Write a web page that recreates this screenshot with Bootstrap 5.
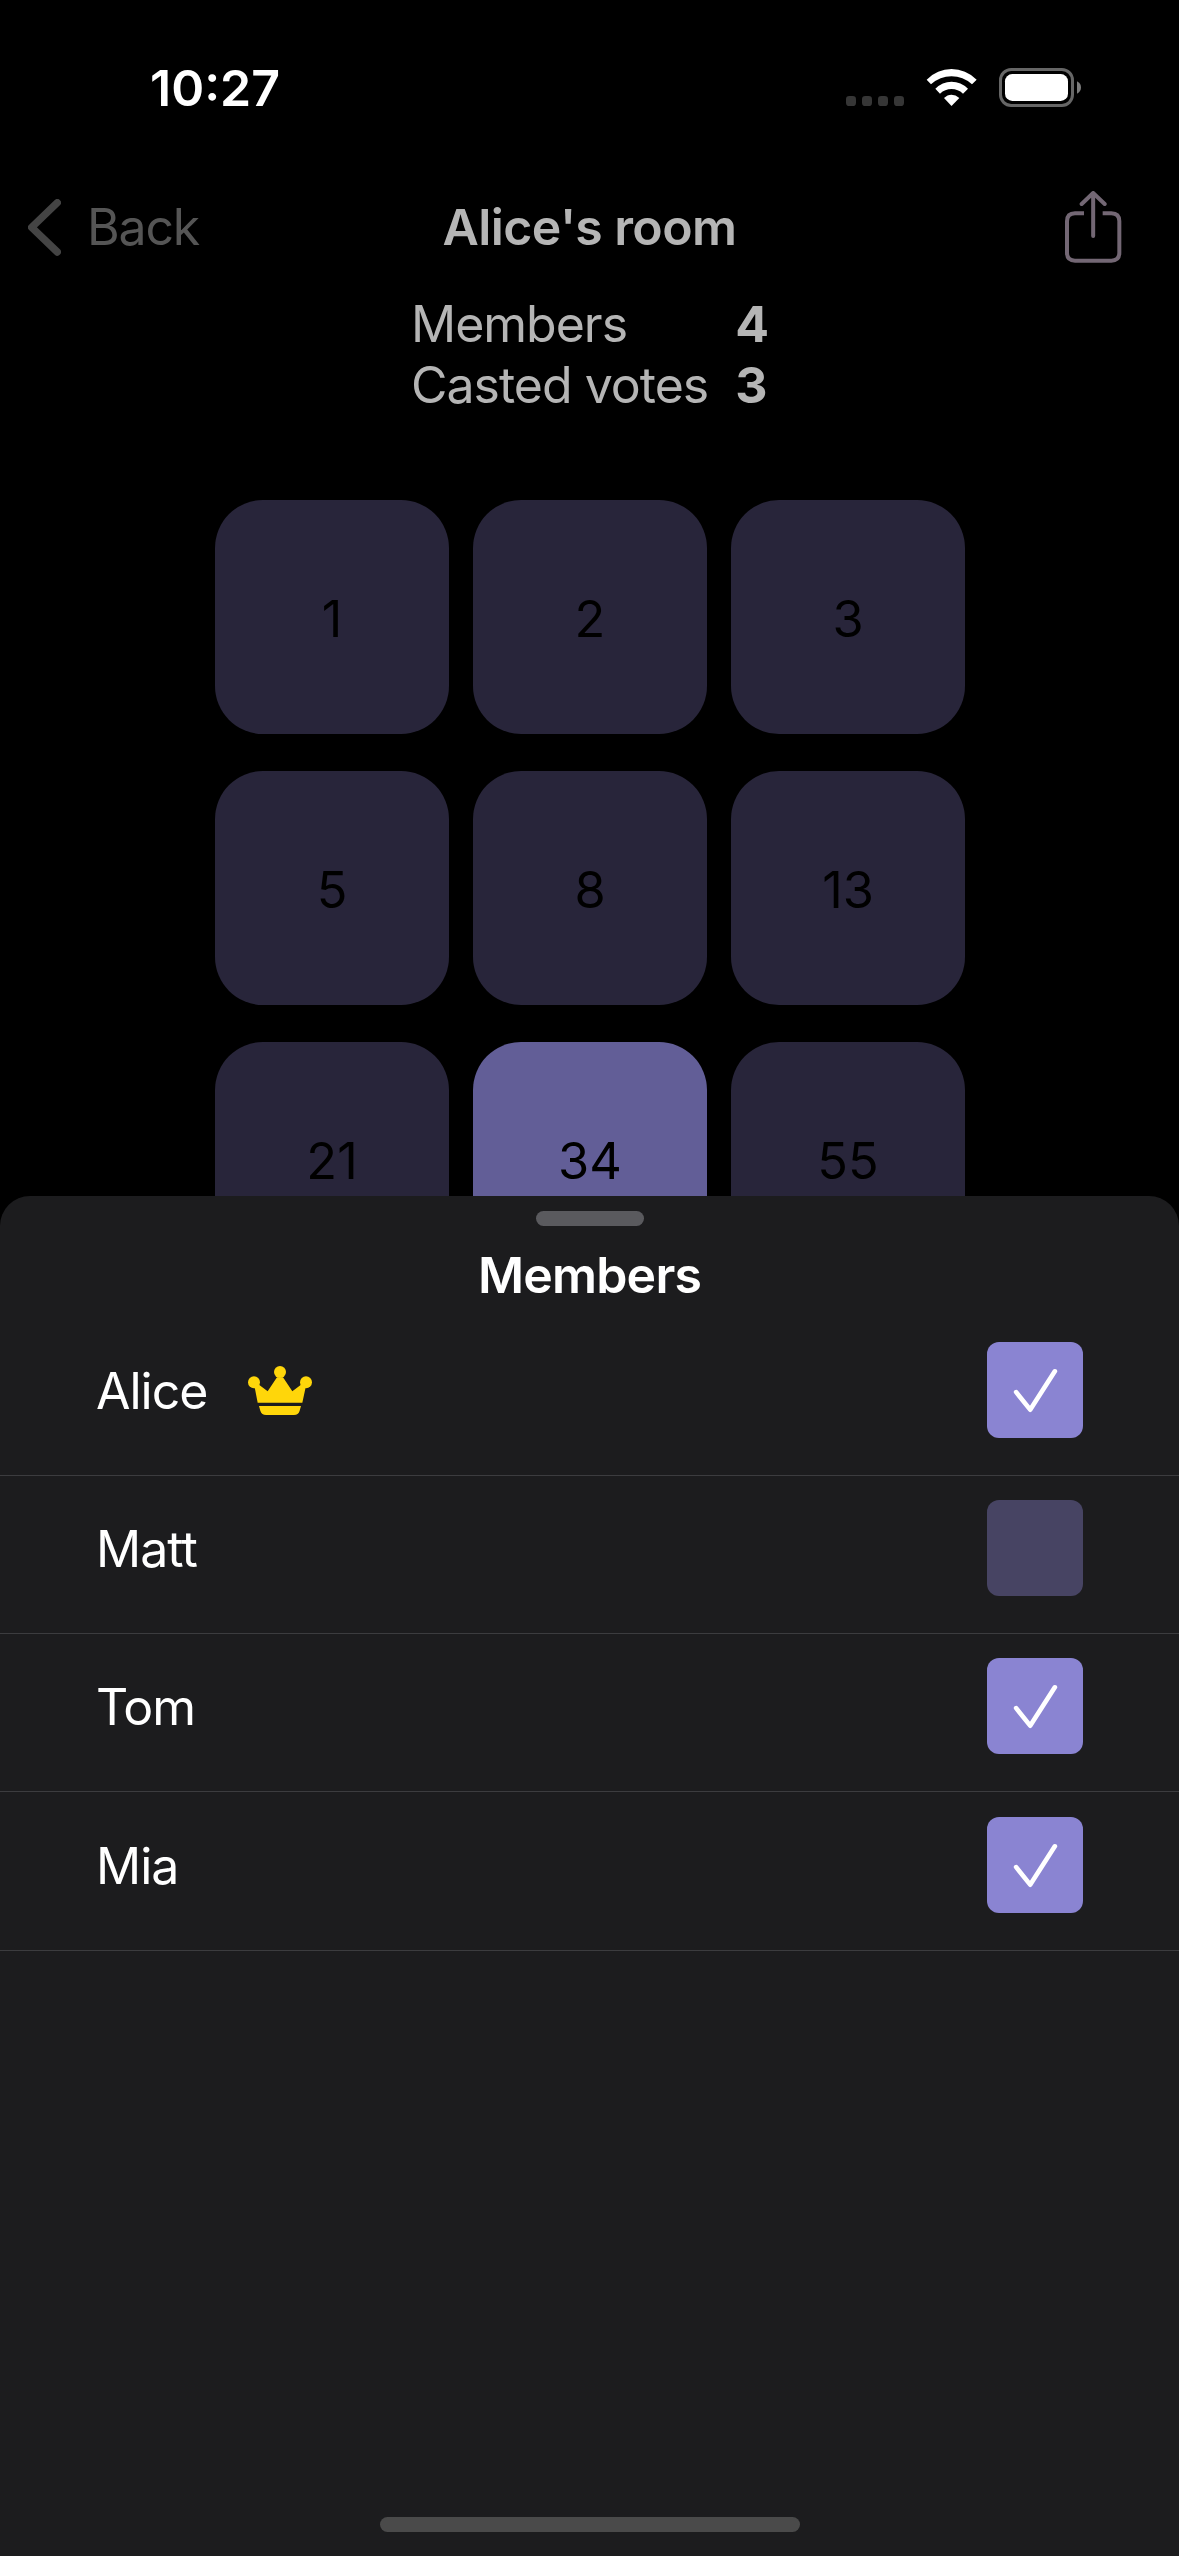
<!DOCTYPE html>
<html lang="en" data-bs-theme="dark">
<head>
<meta charset="utf-8">
<meta name="viewport" content="width=device-width, initial-scale=1">
<title>Alice's room</title>
<link href="https://cdn.jsdelivr.net/npm/bootstrap@5.3.0/dist/css/bootstrap.min.css" rel="stylesheet">
<style>
body { background: #000; font-family: Inter, "Liberation Sans", sans-serif; font-size: 50px; line-height: 61px; letter-spacing: -1px; color: #fff; width: 1179px; height: 2556px; overflow: hidden; }
svg { display: block; flex: none; }
.room { height: 1196px; overflow: hidden; }
.status-bar { height: 175px; padding: 0 98px 0 150px; }
.status-time { letter-spacing: 0; padding-top: 1px; }
.nav-head { height: 103px; padding: 1px 57px 0 28px; }
.nav-head > div { flex: 1 1 0; }
.nav-head > div:first-child { margin-right: 29px; }
.back-link { color: #555; gap: 26px; letter-spacing: -1.2px; }
.room-title, .tally { color: #b5b5b5; }
.room-title { letter-spacing: -.6px; }
.tally { column-gap: 27px; padding-top: 16px; display: grid; grid-template-columns: auto auto; justify-content: center; }
.vote-grid { display: grid; grid-template-columns: repeat(3, 234px); gap: 37px 24px; justify-content: center; padding-top: 84px; font-size: 50.5px; letter-spacing: 0; }
.vote-tile { height: 234px; border-radius: 48px; background: #28253a; color: #000; padding: 2px 0 0 1px; }
.vote-tile.chosen { background: #625e97; }
.sheet { height: 1360px; background: #1c1c1e; border-radius: 30px 30px 0 0; padding-top: 15px; }
.grabber { width: 108px; height: 15px; border-radius: 8px; background: #5a5a5e; }
.sheet-title { margin-top: 19px; letter-spacing: -.8px; }
.member-row { height: 158px; padding: 0 96px 13px; border-bottom: 1px solid #3c3c3f; }
.member-row:first-child { height: 170px; padding: 36px 96px 37px; }
.member-row:last-child { height: 159px; padding-bottom: 12px; }
.member-name { padding-top: 2px; }
.crowned { gap: 41px; }
.tick-box { width: 96px; height: 96px; border-radius: 12px; background: #474463; }
.tick-box.on { background: #8a84d2; }
.home-bar { width: 420px; height: 15px; border-radius: 8px; background: #4a4a4a; margin-bottom: 24px; }
</style>
<script src="https://cdn.jsdelivr.net/npm/bootstrap@5.3.0/dist/js/bootstrap.bundle.min.js"></script>
</head>
<body>
<svg class="d-none">
  <symbol id="tick" viewBox="141 66 288 288"><path d="M228.500 216.500 L270.500 269 L344.500 154" fill="none" stroke="#fff" stroke-width="14" stroke-linecap="round" stroke-linejoin="round"/></symbol>
</svg>
<section class="room">
  <header class="status-bar d-flex align-items-center justify-content-between">
    <span class="status-time fw-semibold">10:27</span>
    <svg width="235" height="39" viewBox="78 84 705 117">
      <g fill="#363636"><rect x="78" y="168" width="30" height="30" rx="10"/><rect x="126" y="168" width="30" height="30" rx="10"/><rect x="174" y="168" width="30" height="30" rx="10"/><rect x="222" y="168" width="30" height="30" rx="10"/></g>
      <g fill="#fff">
        <path d="M320 119 Q352 87 394.500 87 Q437 87 470 119 L456 133 Q429 109 394.500 109 Q360 109 333 133 Z"/>
        <path d="M346 146 Q367 125 394.500 125 Q423 125 444 146 L429 161 Q414 147 394.500 147 Q375 147 360 161 Z"/>
        <path d="M372 174 Q382 164 394.500 164 Q407 164 418 174 L394.500 198 Z"/>
        <rect x="555" y="102" width="189" height="81" rx="22"/>
      </g>
      <rect x="541.500" y="88.500" width="216" height="108" rx="32" fill="none" stroke="#666" stroke-width="9"/>
      <path d="M771 124 Q783 130 783 142.500 Q783 155 771 161 Z" fill="#7c7c7c"/>
    </svg>
  </header>
  <nav class="nav-head d-flex align-items-center">
    <div><a class="back-link d-flex align-items-center text-decoration-none" href="#">
      <svg width="33" height="57" viewBox="84 475 99 171"><path d="M172 486 L95 560 L172 634" fill="none" stroke="#444" stroke-width="22" stroke-linecap="round" stroke-linejoin="round"/></svg>
      <span>Back</span></a></div>
    <span class="room-title fw-semibold">Alice's room</span>
    <div class="d-flex justify-content-end">
      <svg width="57" height="72" viewBox="735 453 171 216"><g fill="none" stroke="#736774" stroke-width="12"><path d="M792 520 H765 Q741 520 741 544 V638 Q741 662 765 662 H874 Q898 662 898 638 V544 Q898 520 874 520 H848"/><path d="M819.500 588 V461 M785 492 L819.500 459 L854 492" stroke-linecap="round" stroke-linejoin="round"/></g></svg>
    </div>
  </nav>
  <div class="tally"><span>Members</span><b>4</b><span>Casted votes</span><b>3</b></div>
  <div class="vote-grid">
    <div class="vote-tile d-flex align-items-center justify-content-center">1</div>
    <div class="vote-tile d-flex align-items-center justify-content-center">2</div>
    <div class="vote-tile d-flex align-items-center justify-content-center">3</div>
    <div class="vote-tile d-flex align-items-center justify-content-center">5</div>
    <div class="vote-tile d-flex align-items-center justify-content-center">8</div>
    <div class="vote-tile d-flex align-items-center justify-content-center">13</div>
    <div class="vote-tile d-flex align-items-center justify-content-center">21</div>
    <div class="vote-tile chosen d-flex align-items-center justify-content-center">34</div>
    <div class="vote-tile d-flex align-items-center justify-content-center">55</div>
  </div>
</section>
<section class="sheet d-flex flex-column">
  <div class="grabber mx-auto"></div>
  <div class="sheet-title text-center fw-semibold">Members</div>
  <div class="members">
    <div class="member-row d-flex align-items-center justify-content-between">
      <div class="crowned d-flex align-items-center"><span class="member-name">Alice</span>
        <svg width="64" height="49" viewBox="744 558 192 147" fill="#ffd60a"><circle cx="762" cy="607" r="18"/><circle cx="840" cy="576" r="18"/><circle cx="918" cy="607" r="18"/><path d="M764 622 L777 614 L803 634 L831 592 H849 L877 634 L903 614 L917 622 L907 668 H773 Z"/><path d="M777 678 H903 L899 692 Q895 705 882 705 H798 Q785 705 781 692 Z"/></svg></div>
      <div class="tick-box on"><svg width="96" height="96"><use href="#tick"/></svg></div>
    </div>
    <div class="member-row d-flex align-items-center justify-content-between"><span class="member-name">Matt</span><div class="tick-box"></div></div>
    <div class="member-row d-flex align-items-center justify-content-between"><span class="member-name">Tom</span><div class="tick-box on"><svg width="96" height="96"><use href="#tick"/></svg></div></div>
    <div class="member-row d-flex align-items-center justify-content-between"><span class="member-name">Mia</span><div class="tick-box on"><svg width="96" height="96"><use href="#tick"/></svg></div></div>
  </div>
  <div class="home-bar mx-auto mt-auto"></div>
</section>
</body>
</html>
